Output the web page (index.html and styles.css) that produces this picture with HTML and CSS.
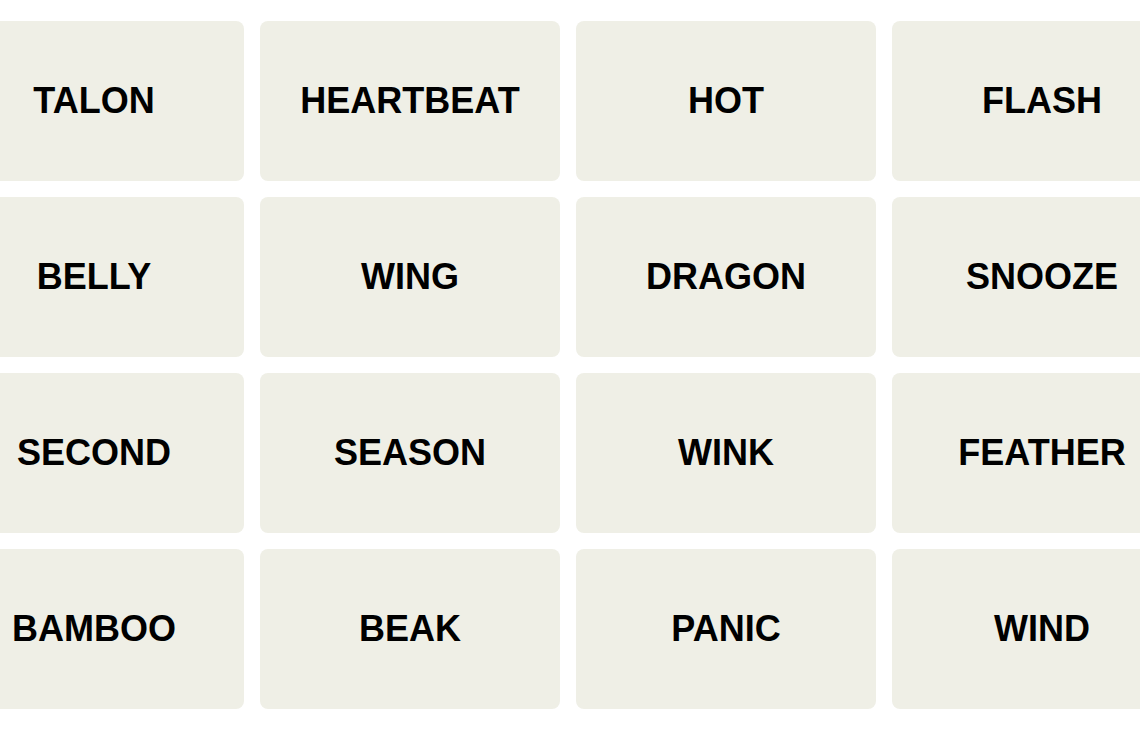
FILE: index.html
```html
<!DOCTYPE html>
<html>
<head>
<meta charset="utf-8">
<link rel="stylesheet" href="styles.css">
</head>
<body>
<div class="board">
  <div class="tile">TALON</div>
  <div class="tile">HEARTBEAT</div>
  <div class="tile">HOT</div>
  <div class="tile">FLASH</div>
  <div class="tile">BELLY</div>
  <div class="tile">WING</div>
  <div class="tile">DRAGON</div>
  <div class="tile">SNOOZE</div>
  <div class="tile">SECOND</div>
  <div class="tile">SEASON</div>
  <div class="tile">WINK</div>
  <div class="tile">FEATHER</div>
  <div class="tile">BAMBOO</div>
  <div class="tile">BEAK</div>
  <div class="tile">PANIC</div>
  <div class="tile">WIND</div>
</div>
</body>
</html>
```
FILE: styles.css
```css
html, body {
  margin: 0;
  padding: 0;
  background: #ffffff;
  overflow: hidden;
}
.board {
  display: grid;
  grid-template-columns: repeat(4, 300px);
  grid-auto-rows: 160px;
  gap: 16px;
  margin-left: -56px;
  margin-top: 21px;
  width: 1248px;
}
.tile {
  background: #efefe6;
  border-radius: 8px;
  display: flex;
  align-items: center;
  justify-content: center;
  font-family: "Liberation Sans", Arial, sans-serif;
  font-weight: 700;
  font-size: 36px;
  color: #000;
  padding-bottom: 0;
  box-sizing: border-box;
}
```
